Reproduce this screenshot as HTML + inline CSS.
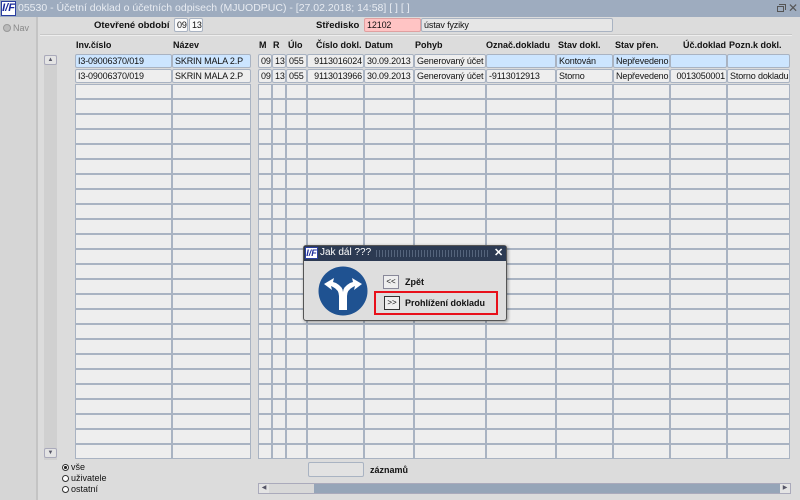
<!DOCTYPE html>
<html><head><meta charset="utf-8">
<style>
*{margin:0;padding:0;box-sizing:border-box}
body{width:800px;height:500px;overflow:hidden;background:#dcdcdc;font-family:"Liberation Sans",sans-serif;font-size:9px;color:#111;position:relative}
.a{position:absolute}
.t{position:absolute;white-space:nowrap}
.b{font-weight:bold}
.cell{position:absolute;height:14px;border:1px solid #a9b3c2;border-radius:2px;background:#eeeeee;padding:0 1px 0 2px;line-height:12px;white-space:nowrap;overflow:hidden;letter-spacing:-0.15px}
.sel{background:#cce5ff}
.col{position:absolute;top:84px;height:375px;border-left:1px solid #a9b3c2;border-right:1px solid #a9b3c2;background:repeating-linear-gradient(to bottom,#a9b3c2 0 1px,#eeeeee 1px 14px,#a9b3c2 14px 15px)}
</style></head><body>
<div class="a" style="left:0;top:0;width:800px;height:17px;background:#9eacbf"></div>
<div class="a" style="left:1px;top:1px;width:15px;height:15px;background:#fff;border:1px solid #2a3ea0;color:#1a2a9a;font-weight:bold;font-style:italic;font-size:11px;line-height:12px;text-align:center">I/F</div>
<div class="t" style="left:18px;top:2px;font-size:10.5px;color:#e8ecf2">05530 - Účetní doklad o účetních odpisech (MJUODPUC) - [27.02.2018; 14:58] [ ] [ ]</div>
<div class="a" style="left:777px;top:6px;width:7px;height:6px;border:1px solid #555"></div>
<div class="a" style="left:779px;top:4px;width:7px;height:6px;border-top:1px solid #555;border-right:1px solid #555"></div>
<div class="t" style="left:788px;top:1px;font-size:12px;color:#555">✕</div>
<div class="a" style="left:0;top:17px;width:38px;height:483px;background:#d6d6d6;border-right:2px solid #c4c4c4"></div>
<div class="a" style="left:3px;top:24px;width:8px;height:8px;border-radius:50%;background:#bbb;border:1px solid #999"></div>
<div class="t" style="left:13px;top:23px;color:#888">Nav</div>
<div class="t b" style="left:94px;top:20px;font-size:9.5px">Otevřené období</div>
<div class="cell" style="left:174px;top:18px;width:14px;background:#fafafa">09</div>
<div class="cell" style="left:189px;top:18px;width:14px;background:#fafafa">13</div>
<div class="t b" style="left:316px;top:20px;font-size:9.5px">Středisko</div>
<div class="cell" style="left:364px;top:18px;width:57px;background:#ffc4c4;border-color:#e0a0a0">12102</div>
<div class="cell" style="left:421px;top:18px;width:192px;background:#e6e6e6">ústav fyziky</div>
<div class="a" style="left:40px;top:34px;width:752px;height:2px;background:#c8c8c8;border-bottom:1px solid #eee"></div>
<div class="t b" style="left:76px;top:40px">Inv.číslo</div>
<div class="t b" style="left:173px;top:40px">Název</div>
<div class="t b" style="left:259px;top:40px">M</div>
<div class="t b" style="left:273px;top:40px">R</div>
<div class="t b" style="left:288px;top:40px">Úlo</div>
<div class="t b" style="left:316px;top:40px">Číslo dokl.</div>
<div class="t b" style="left:365px;top:40px">Datum</div>
<div class="t b" style="left:415px;top:40px">Pohyb</div>
<div class="t b" style="left:486px;top:40px">Označ.dokladu</div>
<div class="t b" style="left:558px;top:40px">Stav dokl.</div>
<div class="t b" style="left:615px;top:40px">Stav přen.</div>
<div class="t b" style="left:683px;top:40px">Úč.doklad</div>
<div class="t b" style="left:729px;top:40px">Pozn.k dokl.</div>
<div class="a" style="left:44px;top:55px;width:13px;height:405px;background:#d0d0d0"></div>
<div class="a" style="left:44px;top:55px;width:13px;height:10px;background:#e4e4e4;border:1px solid #aab;border-radius:2px;font-size:6px;text-align:center;line-height:8px;color:#556">▲</div>
<div class="a" style="left:44px;top:448px;width:13px;height:10px;background:#e4e4e4;border:1px solid #aab;border-radius:2px;font-size:6px;text-align:center;line-height:8px;color:#556">▼</div>
<div class="cell sel" style="left:75px;top:54px;width:97px">I3-09006370/019</div>
<div class="cell sel" style="left:172px;top:54px;width:79px">SKRIN MALA 2.P</div>
<div class="cell" style="left:258px;top:54px;width:14px">09</div>
<div class="cell" style="left:272px;top:54px;width:14px">13</div>
<div class="cell" style="left:286px;top:54px;width:21px">055</div>
<div class="cell" style="left:307px;top:54px;width:57px;text-align:right">9113016024</div>
<div class="cell" style="left:364px;top:54px;width:50px">30.09.2013</div>
<div class="cell" style="left:414px;top:54px;width:72px">Generovaný účet</div>
<div class="cell sel" style="left:486px;top:54px;width:70px"></div>
<div class="cell sel" style="left:556px;top:54px;width:57px">Kontován</div>
<div class="cell sel" style="left:613px;top:54px;width:57px">Nepřevedeno</div>
<div class="cell sel" style="left:670px;top:54px;width:57px"></div>
<div class="cell sel" style="left:727px;top:54px;width:63px"></div>
<div class="cell" style="left:75px;top:69px;width:97px">I3-09006370/019</div>
<div class="cell" style="left:172px;top:69px;width:79px">SKRIN MALA 2.P</div>
<div class="cell" style="left:258px;top:69px;width:14px">09</div>
<div class="cell" style="left:272px;top:69px;width:14px">13</div>
<div class="cell" style="left:286px;top:69px;width:21px">055</div>
<div class="cell" style="left:307px;top:69px;width:57px;text-align:right">9113013966</div>
<div class="cell" style="left:364px;top:69px;width:50px">30.09.2013</div>
<div class="cell" style="left:414px;top:69px;width:72px">Generovaný účet</div>
<div class="cell" style="left:486px;top:69px;width:70px">-9113012913</div>
<div class="cell" style="left:556px;top:69px;width:57px">Storno</div>
<div class="cell" style="left:613px;top:69px;width:57px">Nepřevedeno</div>
<div class="cell" style="left:670px;top:69px;width:57px;text-align:right">0013050001</div>
<div class="cell" style="left:727px;top:69px;width:63px">Storno dokladu</div>
<div class="col" style="left:75px;width:97px"></div>
<div class="col" style="left:172px;width:79px"></div>
<div class="col" style="left:258px;width:14px"></div>
<div class="col" style="left:272px;width:14px"></div>
<div class="col" style="left:286px;width:21px"></div>
<div class="col" style="left:307px;width:57px"></div>
<div class="col" style="left:364px;width:50px"></div>
<div class="col" style="left:414px;width:72px"></div>
<div class="col" style="left:486px;width:70px"></div>
<div class="col" style="left:556px;width:57px"></div>
<div class="col" style="left:613px;width:57px"></div>
<div class="col" style="left:670px;width:57px"></div>
<div class="col" style="left:727px;width:63px"></div>
<div class="a" style="left:62px;top:464px;width:7px;height:7px;border-radius:50%;border:1px solid #333;background:radial-gradient(#222 40%,#fff 50%)"></div>
<div class="t" style="left:71px;top:462px">vše</div>
<div class="a" style="left:62px;top:475px;width:7px;height:7px;border-radius:50%;border:1px solid #333;background:#fff"></div>
<div class="t" style="left:71px;top:473px">uživatele</div>
<div class="a" style="left:62px;top:486px;width:7px;height:7px;border-radius:50%;border:1px solid #333;background:#fff"></div>
<div class="t" style="left:71px;top:484px">ostatní</div>
<div class="cell" style="left:308px;top:462px;width:56px;height:15px;background:#e2e2e2"></div>
<div class="t b" style="left:370px;top:465px">záznamů</div>
<div class="a" style="left:258px;top:483px;width:533px;height:11px;background:#96a5b8;border:1px solid #aab"></div>
<div class="a" style="left:259px;top:484px;width:55px;height:9px;background:#d8d8d8"></div>
<div class="a" style="left:259px;top:484px;width:10px;height:9px;background:#e4e4e4;font-size:6px;line-height:9px;text-align:center;color:#556">◀</div>
<div class="a" style="left:780px;top:484px;width:10px;height:9px;background:#e4e4e4;font-size:6px;line-height:9px;text-align:center;color:#556">▶</div>
<div class="a" style="left:303px;top:245px;width:204px;height:76px;background:#dedede;border:1px solid #555;border-radius:3px;box-shadow:1px 1px 3px rgba(0,0,0,.4)"></div>
<div class="a" style="left:304px;top:246px;width:202px;height:15px;background:#2c3a52"></div>
<div class="a" style="left:305px;top:247px;width:13px;height:12px;background:#fff;border:1px solid #2a3ea0;color:#1a2a9a;font-weight:bold;font-style:italic;font-size:9px;line-height:10px;text-align:center">I/F</div>
<div class="t" style="left:320px;top:247px;font-size:10px;color:#fff">Jak dál ???</div>
<div class="a" style="left:376px;top:250px;width:112px;height:7px;background:repeating-linear-gradient(90deg,#55647c 0 1px,transparent 1px 3px)"></div>
<div class="t" style="left:494px;top:246px;font-size:11px;color:#fff;font-weight:bold">✕</div>
<svg class="a" style="left:318px;top:266px" width="50" height="50" viewBox="0 0 50 50">
<circle cx="25" cy="25" r="24.5" fill="#1f5291"/>
<path d="M21 44 V30 Q21 24 15 21 L13 20 L14 24 L6 18 L16 12 L15 16 L18 17 Q25 21 25 26 Q25 21 32 17 L35 16 L34 12 L44 18 L36 24 L37 20 L35 21 Q29 24 29 30 V44 Z" fill="#fff"/>
</svg>
<div class="a" style="left:383px;top:275px;width:16px;height:14px;background:#eee;border:1px solid #889;font-size:8px;line-height:12px;text-align:center">&lt;&lt;</div>
<div class="t b" style="left:405px;top:277px">Zpět</div>
<div class="a" style="left:374px;top:291px;width:124px;height:24px;border:2.5px solid #e8101a"></div>
<div class="a" style="left:384px;top:296px;width:16px;height:14px;background:#eee;border:1px solid #333;font-size:8px;line-height:12px;text-align:center">&gt;&gt;</div>
<div class="t b" style="left:405px;top:298px">Prohlížení dokladu</div>
</body></html>
